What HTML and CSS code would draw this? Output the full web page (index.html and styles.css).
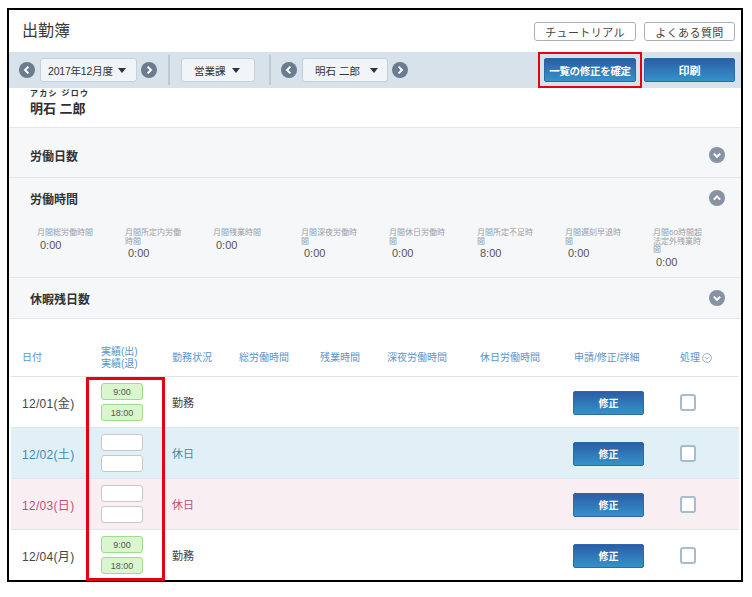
FILE: index.html
```html
<!DOCTYPE html>
<html lang="ja">
<head>
<meta charset="utf-8">
<title>出勤簿</title>
<link rel="stylesheet" href="styles.css">
</head>
<body>
<div class="frame">
  <div class="header">
    <div class="title">出勤簿</div>
    <div class="header-btns">
      <button class="btn-light btn-tut">チュートリアル</button>
      <button class="btn-light btn-faq">よくある質問</button>
    </div>
  </div>

  <div class="toolbar">
    <div class="tool-left">
      <span class="circ"><svg viewBox="0 0 16 16" width="16" height="16"><circle cx="8" cy="8" r="8" fill="#6b7c90"/><path d="M9.4 4.6 L6 8 L9.4 11.4" stroke="#fff" stroke-width="2" fill="none"/></svg></span>
      <span class="select sel-month">2017年12月度<i class="caret"></i></span>
      <span class="circ"><svg viewBox="0 0 16 16" width="16" height="16"><circle cx="8" cy="8" r="8" fill="#6b7c90"/><path d="M6.6 4.6 L10 8 L6.6 11.4" stroke="#fff" stroke-width="2" fill="none"/></svg></span>
      <span class="divider"></span>
      <span class="select sel-dept">営業課<i class="caret"></i></span>
      <span class="divider"></span>
      <span class="circ"><svg viewBox="0 0 16 16" width="16" height="16"><circle cx="8" cy="8" r="8" fill="#6b7c90"/><path d="M9.4 4.6 L6 8 L9.4 11.4" stroke="#fff" stroke-width="2" fill="none"/></svg></span>
      <span class="select sel-name">明石 二郎<i class="caret"></i></span>
      <span class="circ"><svg viewBox="0 0 16 16" width="16" height="16"><circle cx="8" cy="8" r="8" fill="#6b7c90"/><path d="M6.6 4.6 L10 8 L6.6 11.4" stroke="#fff" stroke-width="2" fill="none"/></svg></span>
    </div>
    <div class="tool-right">
      <span class="confirm-wrap"><button class="btn-blue btn-confirm">一覧の修正を確定</button></span>
      <button class="btn-blue btn-print">印刷</button>
    </div>
  </div>

  <div class="person">
    <div class="kana">アカシ ジロウ</div>
    <div class="pname">明石 二郎</div>
  </div>

  <div class="section sec-days">
    <div class="sec-head">
      <span class="sec-title">労働日数</span>
      <svg class="chev" viewBox="0 0 16 16" width="16" height="16"><circle cx="8" cy="8" r="8" fill="#8792a5"/><path d="M4.8 6.6 L8 9.8 L11.2 6.6" stroke="#fff" stroke-width="2" fill="none"/></svg>
    </div>
  </div>

  <div class="section sec-hours">
    <div class="sec-head">
      <span class="sec-title">労働時間</span>
      <svg class="chev" viewBox="0 0 16 16" width="16" height="16"><circle cx="8" cy="8" r="8" fill="#8792a5"/><path d="M4.8 9.6 L8 6.4 L11.2 9.6" stroke="#fff" stroke-width="2" fill="none"/></svg>
    </div>
    <div class="stats">
      <div class="stat"><div class="st-label">月間総労働時間</div><div class="st-val">0:00</div></div>
      <div class="stat"><div class="st-label">月間所定内労働<br>時間</div><div class="st-val">0:00</div></div>
      <div class="stat"><div class="st-label">月間残業時間</div><div class="st-val">0:00</div></div>
      <div class="stat"><div class="st-label">月間深夜労働時<br>間</div><div class="st-val">0:00</div></div>
      <div class="stat"><div class="st-label">月間休日労働時<br>間</div><div class="st-val">0:00</div></div>
      <div class="stat"><div class="st-label">月間所定不足時<br>間</div><div class="st-val">8:00</div></div>
      <div class="stat"><div class="st-label">月間遅刻早退時<br>間</div><div class="st-val">0:00</div></div>
      <div class="stat"><div class="st-label">月間60時間超<br>法定外残業時<br>間</div><div class="st-val">0:00</div></div>
    </div>
  </div>

  <div class="section sec-leave">
    <div class="sec-head">
      <span class="sec-title">休暇残日数</span>
      <svg class="chev" viewBox="0 0 16 16" width="16" height="16"><circle cx="8" cy="8" r="8" fill="#8792a5"/><path d="M4.8 6.6 L8 9.8 L11.2 6.6" stroke="#fff" stroke-width="2" fill="none"/></svg>
    </div>
  </div>

  <div class="table">
    <div class="thead">
      <div>日付</div>
      <div>実績(出)<br>実績(退)</div>
      <div>勤務状況</div>
      <div>総労働時間</div>
      <div>残業時間</div>
      <div>深夜労働時間</div>
      <div>休日労働時間</div>
      <div>申請/修正/詳細</div>
      <div class="th-proc">処理 <svg viewBox="0 0 10 10" width="10" height="10"><circle cx="5" cy="5" r="4.4" stroke="#8fa6ba" stroke-width="0.9" fill="none"/><path d="M3 4.2 L5 6.2 L7 4.2" stroke="#8fa6ba" stroke-width="0.9" fill="none"/></svg></div>
    </div>
    <div class="tbody">
      <div class="row">
        <div class="date">12/01(金)</div>
        <div class="times"><span class="tbox filled">9:00</span><span class="tbox filled">18:00</span></div>
        <div class="status">勤務</div>
        <div></div><div></div><div></div><div></div>
        <div><button class="btn-blue btn-edit">修正</button></div>
        <div><span class="check"></span></div>
      </div>
      <div class="row sat">
        <div class="date">12/02(土)</div>
        <div class="times"><span class="tbox"></span><span class="tbox"></span></div>
        <div class="status">休日</div>
        <div></div><div></div><div></div><div></div>
        <div><button class="btn-blue btn-edit">修正</button></div>
        <div><span class="check"></span></div>
      </div>
      <div class="row sun">
        <div class="date">12/03(日)</div>
        <div class="times"><span class="tbox"></span><span class="tbox"></span></div>
        <div class="status">休日</div>
        <div></div><div></div><div></div><div></div>
        <div><button class="btn-blue btn-edit">修正</button></div>
        <div><span class="check"></span></div>
      </div>
      <div class="row">
        <div class="date">12/04(月)</div>
        <div class="times"><span class="tbox filled">9:00</span><span class="tbox filled">18:00</span></div>
        <div class="status">勤務</div>
        <div></div><div></div><div></div><div></div>
        <div><button class="btn-blue btn-edit">修正</button></div>
        <div><span class="check"></span></div>
      </div>
      <div class="hl-col"></div>
    </div>
  </div>
</div>
</body>
</html>
```

FILE: styles.css
```css
* { box-sizing: border-box; }
html, body { margin: 0; padding: 0; background: #fff; }
body {
  font-family: "Liberation Sans", "Noto Sans CJK JP", sans-serif;
  color: #333;
}
button { font-family: inherit; cursor: pointer; }

.frame {
  margin: 8px 0 0 7px;
  width: 736px;
  border: 2px solid #000;
  background: #fff;
}

/* header */
.header {
  height: 42px;
  display: flex;
  align-items: center;
  justify-content: space-between;
  padding: 0 6px 0 13px;
}
.title { font-size: 16px; color: #3a3a3a; margin-top: -4px; }
.header-btns { display: flex; gap: 8px; margin-top: 1px; }
.btn-light {
  height: 19px;
  background: #fff;
  border: 1px solid #a9b2bb;
  border-radius: 3px;
  font-size: 11px;
  letter-spacing: 0.4px;
  color: #444;
  padding: 0;
}
.btn-tut { width: 102px; }
.btn-faq { width: 91px; }

/* toolbar */
.toolbar {
  height: 36px;
  background: #d7e2ea;
  display: flex;
  align-items: center;
  justify-content: space-between;
  padding: 0 6px 0 10px;
}
.tool-left { display: flex; align-items: center; }
.circ { display: flex; width: 16px; height: 16px; }
.select {
  height: 24px;
  background: #f2f5f8;
  border: 1px solid #c3cfd9;
  border-radius: 3px;
  display: flex;
  align-items: center;
  justify-content: space-between;
  font-size: 10.5px;
  color: #333;
  margin: 0 4px 0 5px;
}
.sel-month { width: 97px; padding: 0 10px 0 7px; letter-spacing: -0.2px; }
.sel-dept { width: 74px; padding: 0 14px 0 12px; margin: 0; }
.sel-name { width: 86px; padding: 0 9px 0 12px; }
.caret {
  width: 0; height: 0;
  border-left: 4px solid transparent;
  border-right: 4px solid transparent;
  border-top: 5px solid #2d3540;
}
.divider {
  width: 2px;
  height: 30px;
  background: #bccad5;
  margin: 0 11px 0 11px;
}
.sel-dept + .divider { margin: 0 10px 0 14px; }

.tool-right { display: flex; gap: 8px; }
.btn-blue {
  border: 1px solid #2b6aa6;
  border-radius: 2px;
  background: linear-gradient(#2b5ea8, #3592c8);
  color: #fff;
  font-weight: bold;
  font-size: 11px;
  padding: 0;
}
.confirm-wrap { position: relative; display: flex; }
.confirm-wrap::after {
  content: "";
  position: absolute;
  left: -6px; right: -6px; top: -6px; bottom: -6px;
  border: 2px solid #e60012;
  pointer-events: none;
}
.btn-confirm {
  width: 92px; height: 24px;
  font-size: 10.5px;
  letter-spacing: -0.3px;
}
.btn-print { width: 91px; height: 24px; }

/* person */
.person { height: 39px; padding: 1px 0 0 21px; }
.kana { font-size: 8px; font-weight: bold; color: #333; line-height: 10px; letter-spacing: 1.3px; }
.pname { font-size: 13px; font-weight: bold; color: #2f2f2f; line-height: 17px; margin-top: 1px; }

/* sections */
.section { background: #f6f7f9; border-top: 1px solid #e3e6ea; }
.sec-days { height: 50px; padding-top: 7px; }
.sec-hours { height: 100px; }
.sec-leave { height: 42px; border-bottom: 1px solid #e3e6ea; }
.sec-head {
  height: 40px;
  display: flex;
  align-items: center;
  justify-content: space-between;
  padding: 0 16px 0 21px;
}
.sec-title { font-size: 12px; font-weight: bold; color: #333; }

.stats { display: flex; padding: 11px 0 0 28px; }
.stat { width: 88px; }
.st-label {
  font-size: 8px;
  line-height: 8.5px;
  color: #9aa0a6;
  white-space: nowrap;
}
.st-val {
  font-size: 11px;
  line-height: 12px;
  color: #555;
  margin-top: 1px;
  padding-left: 3px;
}

/* table */
.table { margin: 0 2px; }
.thead, .row {
  display: grid;
  grid-template-columns: 79px 71px 67px 81px 67px 93px 94px 106px 1fr;
  padding-left: 11px;
  align-items: center;
}
.thead {
  height: 58px;
  padding-top: 21px;
  border-bottom: 1px solid #dfe4e8;
  font-size: 10px;
  line-height: 12px;
  color: #5a96cb;
}
.th-proc { display: flex; align-items: center; gap: 2px; }
.th-proc svg { margin-top: -1px; }

.tbody { position: relative; }
.row { height: 51px; border-top: 1px solid #e1e5e9; font-size: 11px; color: #444; }
.row:first-child { border-top: none; height: 50px; }
.row .date { font-size: 12px; letter-spacing: 0.3px; }
.row.sat { background: #e1f0f7; }
.row.sun { background: #f9eff3; }
.row.sat .date, .row.sat .status { color: #3f8bb1; }
.row.sun .date, .row.sun .status { color: #c24f79; }
.times { display: flex; flex-direction: column; gap: 4px; }
.tbox {
  width: 42px; height: 17px;
  border: 1px solid #c8c8c8;
  border-radius: 3px;
  background: #fff;
  font-size: 9px;
  color: #555;
  display: flex; align-items: center; justify-content: center;
}
.tbox.filled { background: #d9f6cf; border-color: #9edc8c; }
.btn-edit { width: 71px; height: 24px; margin-left: -1px; font-size: 10px; margin-top: 1px; }
.check {
  display: block;
  width: 16px; height: 17px;
  border: 2px solid #a8bccd;
  border-radius: 3px;
  background: #fff;
  margin-top: 1px;
}
.hl-col {
  position: absolute;
  left: 75px;
  top: 0;
  bottom: -1px;
  width: 79px;
  border: 3px solid #e60012;
  pointer-events: none;
}
```
